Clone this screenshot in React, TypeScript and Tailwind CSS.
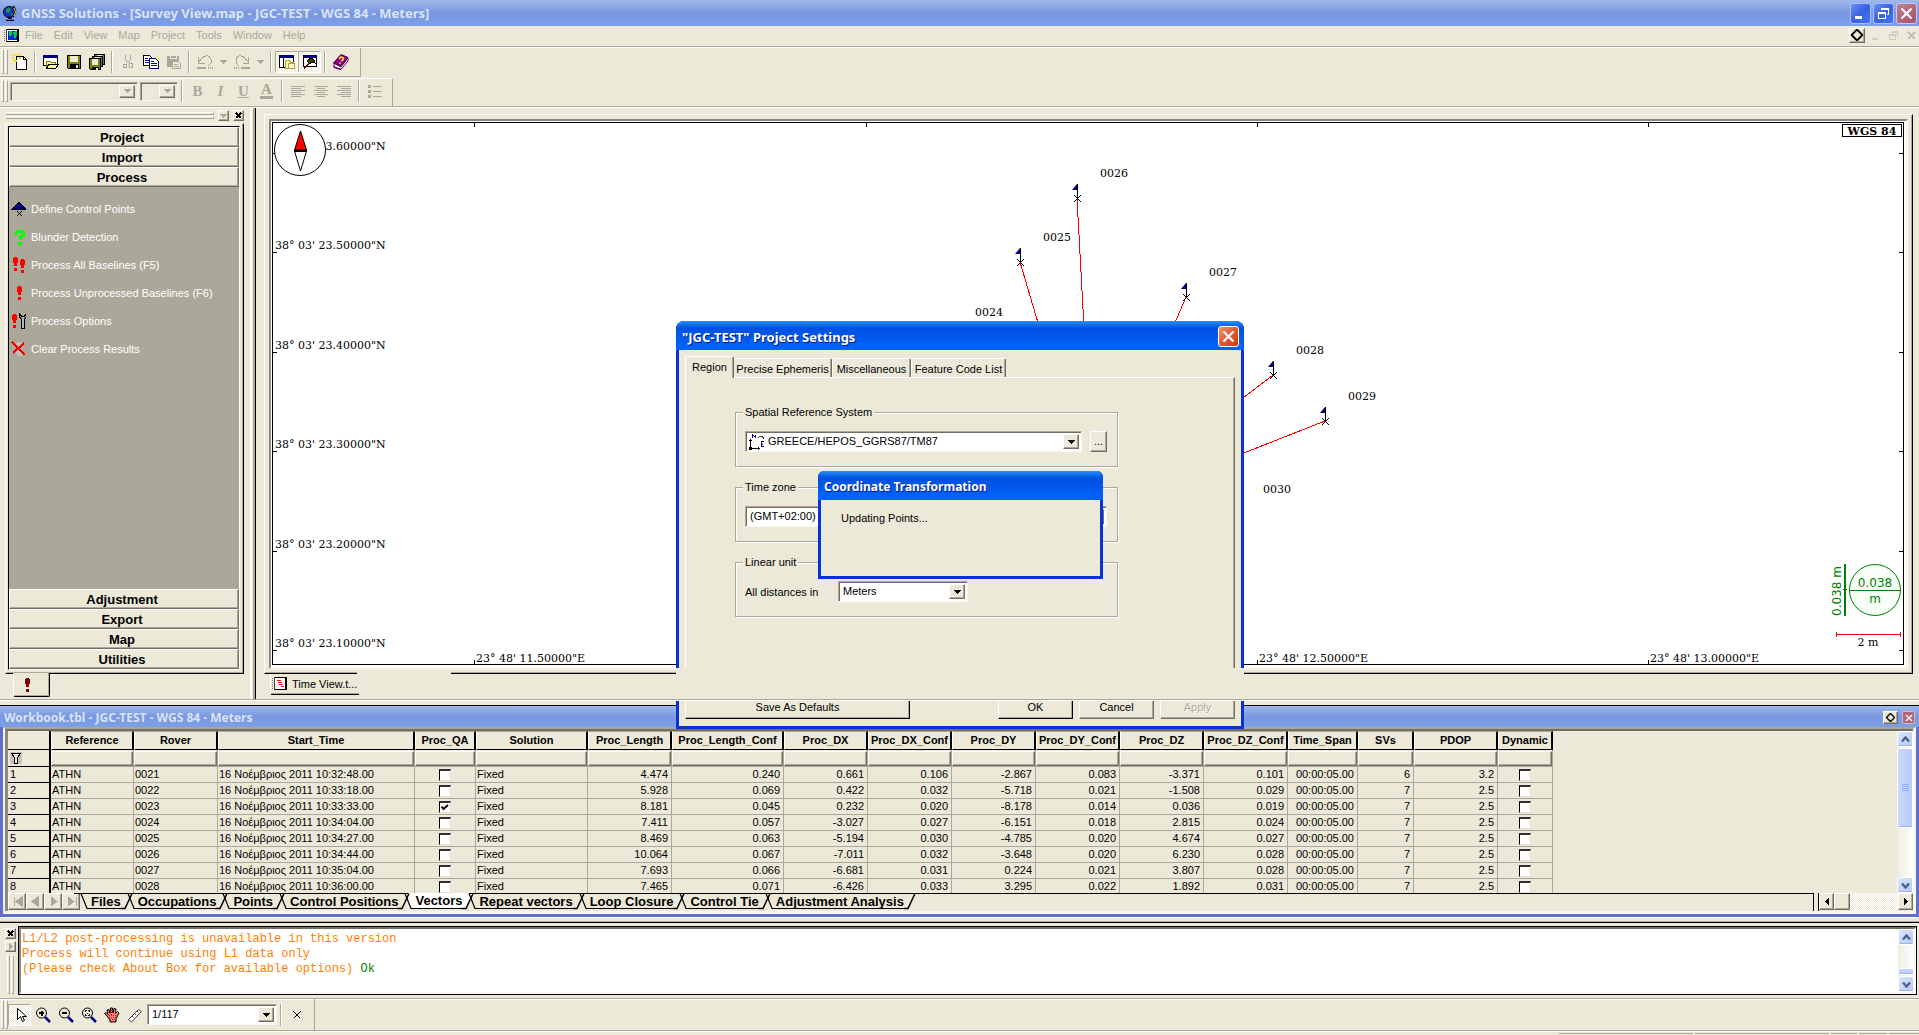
import React, { type ReactNode } from 'react';
import clsx from 'clsx';

const RAISED =
  'border border-t-white border-l-white border-r-[#716f64] border-b-[#716f64] shadow-[inset_-1px_-1px_0_#aca899] bg-[#ece9d8]';
const SUNKEN =
  'border border-t-[#aca899] border-l-[#aca899] border-r-[#f8f7f2] border-b-[#f8f7f2] shadow-[inset_1px_1px_0_#716f64]';
const DITHER =
  'bg-[conic-gradient(#ffffff_25%,#ece9d8_0_50%,#ffffff_0_75%,#ece9d8_0)] bg-[length:2px_2px]';

/* ---------- small shared pieces ---------- */

function Icon({ w = 16, h = 16, children }: { w?: number; h?: number; children: ReactNode }) {
  return (
    <svg width={w} height={h} viewBox={`0 0 ${w} ${h}`} shapeRendering="crispEdges" fill="none" aria-hidden="true" className="shrink-0">
      {children}
    </svg>
  );
}

function Arrow({ dim = false }: { dim?: boolean }) {
  return (
    <Icon w={7} h={4}>
      <path d="M0 0h7L3.5 4z" fill={dim ? '#aca899' : '#000'} />
    </Icon>
  );
}

function Combo({ label, value, className, disabled = false, icon }: { label: string; value: string; className: string; disabled?: boolean; icon?: ReactNode }) {
  return (
    <span className={clsx('relative flex items-center p-[2px]', SUNKEN, className, disabled ? 'bg-[#ece9d8]' : 'bg-white')}>
      {icon}
      <select aria-label={label} disabled={disabled} className="h-full min-w-0 flex-1 appearance-none bg-transparent pl-0.5 leading-none text-black outline-none">
        <option>{value}</option>
      </select>
      <span className={clsx('pointer-events-none flex h-full w-4 shrink-0 items-center justify-center', RAISED)}>
        <Arrow dim={disabled} />
      </span>
    </span>
  );
}

function Grip() {
  return (
    <span className="flex h-full gap-px py-px pl-px" aria-hidden="true">
      <span className="w-[3px] border border-l-white border-t-white border-r-[#aca899] border-b-[#aca899]" />
      <span className="w-[3px] border border-l-white border-t-white border-r-[#aca899] border-b-[#aca899]" />
    </span>
  );
}

function Sep() {
  return <span className="mx-[3px] h-[22px] w-0.5 border-l border-l-[#aca899] border-r border-r-white" aria-hidden="true" />;
}

function Tool({ label, children, on = false, narrow = false }: { label: string; children: ReactNode; on?: boolean; narrow?: boolean }) {
  return (
    <button
      type="button"
      aria-label={label}
      className={clsx(
        'flex h-[22px] items-center justify-center',
        narrow ? 'w-3.5' : 'w-[23px]',
        on && 'border border-t-[#aca899] border-l-[#aca899] border-r-white border-b-white',
        on && DITHER,
      )}
    >
      {children}
    </button>
  );
}

/* ---------- icons ---------- */

const NewIcon = () => (
  <Icon>
    <path d="M4.5 2.5h7l3 3v10h-10z" fill="#fff" stroke="#000" />
    <path d="M11.500 2.500v3h3" stroke="#000" />
    <path d="M0 0l2 2M4 0v2M8 0l-2 2M0 4h2M6 4h3M1 8l2-2M4 6v2" stroke="#f0e020" strokeWidth="2" />
  </Icon>
);
const OpenIcon = () => (
  <Icon>
    <path d="M.5 1.500h14v10H.5z" fill="#fff" stroke="#000" />
    <path d="M0 1h15v3H0z" fill="#000080" />
    <path d="M3.500 14.500v-7h4l1 1h4v2" fill="#ffff9c" stroke="#808000" />
    <path d="M3.500 14.500l2-4h10l-3 4z" fill="#ffff9c" stroke="#000" />
  </Icon>
);
const SaveIcon = ({ x = 0, y = 1, s = 13 }: { x?: number; y?: number; s?: number }) => (
  <g transform={`translate(${x} ${y})`}>
    <path d={`M.5.5h${s}v${s}h-${s - 1}l-1-1z`} fill="#808000" stroke="#000" />
    <path d={`M3 1h${s - 5}v6h-${s - 5}z`} fill="#ece9d8" />
    <path d={`M3 9h${s - 4}v4h-${s - 4}z`} fill="#000" />
    <path d={`M${s - 4} 10h2v3h-2z`} fill="#ece9d8" />
  </g>
);
const CutIcon = () => (
  <Icon>
    <path d="M5.500 1v4l2 4M10.500 1v4l-2 4" stroke="#aca899" />
    <circle cx="5" cy="12" r="2" stroke="#aca899" />
    <circle cx="11" cy="11.500" r="2" stroke="#aca899" />
  </Icon>
);
const CopyIcon = () => (
  <Icon>
    <path d="M.5 1.500h6l2 2v8h-8z" fill="#fff" stroke="#000" />
    <path d="M2 4.500h3M2 6.500h5M2 8.500h5" stroke="#000080" />
    <path d="M6.500 4.500h6l3 3v7h-9z" fill="#fff" stroke="#000080" />
    <path d="M8 7.500h3M8 9.500h6M8 11.500h6" stroke="#000080" />
  </Icon>
);
const PasteIcon = () => (
  <Icon>
    <path d="M1 2h12v11H1z" fill="#aca899" />
    <path d="M4 1h6v3H4z" fill="#aca899" stroke="#ece9d8" />
    <path d="M6.500 7.500h6l2 2v5h-8z" fill="#ece9d8" stroke="#aca899" />
    <path d="M8 10.500h4M8 12.500h5" stroke="#aca899" />
  </Icon>
);
const Undo = ({ flip = false }: { flip?: boolean }) => (
  <Icon>
    <g transform={flip ? 'translate(16 0) scale(-1 1)' : undefined} stroke="#aca899">
      <path d="M1.500 3v6h6M2 8l3-4q6-5 9 1v4l-3 3" />
      <path d="M0 13.500h9M11 13.500h1M13 13.500h1M15 13.500h1" strokeWidth="2" />
    </g>
  </Icon>
);
const ProjectWin = () => (
  <Icon>
    <path d="M.5 1.500h14v12H.5z" fill="#fff" stroke="#000" />
    <path d="M0 1h15v3H0z" fill="#000080" />
    <path d="M4.500 4v9" stroke="#000" />
    <path d="M6.500 14.500v-8h4l1 2h3v6z" fill="#ffff9c" stroke="#aca040" />
    <path d="M9 9h6v5H9z" fill="#fff8c0" stroke="#aca040" />
  </Icon>
);
const HammerWin = () => (
  <Icon>
    <path d="M1.500 1.500h13v11h-13z" fill="#fff" stroke="#000" />
    <path d="M1 1h14v3H1z" fill="#000080" />
    <path d="M2 14.500l7-7" stroke="#800000" strokeWidth="2" />
    <path d="M5 7l4-3 3 2 1 3-3-1-2 2z" fill="#404000" stroke="#000" />
  </Icon>
);
const BookIcon = () => (
  <Icon>
    <path d="M1 9v4l7 2.500L15 7V4L8 13z" fill="#fff" stroke="#500050" shapeRendering="auto" />
    <path d="M.5 9L8 .5l7 3L8 12z" fill="#900090" stroke="#400040" shapeRendering="auto" />
    <path d="M.5 13l7.500 2.500" stroke="#800080" strokeWidth="1.500" shapeRendering="auto" />
    <path d="M6 5l2-2 2.500 1-.5 2-2 1M7 8.500v1.500" stroke="#ffd030" strokeWidth="1.500" shapeRendering="auto" />
  </Icon>
);
const Lines = ({ kind }: { kind: 'l' | 'c' | 'r' }) => (
  <Icon>
    <path
      d={
        kind === 'l'
          ? 'M1 3.500h14M1 5.500h10M1 7.500h14M1 9.500h10M1 11.500h14M1 13.500h10'
          : kind === 'c'
            ? 'M1 3.500h14M4 5.500h8M1 7.500h14M4 9.500h8M1 11.500h14M4 13.500h8'
            : 'M1 3.500h14M5 5.500h10M1 7.500h14M5 9.500h10M1 11.500h14M5 13.500h10'
      }
      stroke="#aca899"
    />
  </Icon>
);
const ListIcon = () => (
  <Icon>
    <path d="M1 2h3v3H1zM1 7h3v3H1zM1 12h3v3H1z" fill="#aca899" />
    <path d="M6 3.500h9M6 8.500h9M6 13.500h9" stroke="#aca899" />
  </Icon>
);
const Globe = () => (
  <svg width="16" height="16" viewBox="0 0 16 16" aria-hidden="true">
    <circle cx="7" cy="7" r="5.500" fill="#1030c8" stroke="#001" />
    <path d="M4 4l3-2 2 3-2 3-3-1zM8 9l3-1-1 3z" fill="#2a8a50" />
    <path d="M11 1q5 5 0 11M6 13h4M4 15.500h8" stroke="#000" strokeWidth="1.500" fill="none" />
    <path d="M12 3q3 4 0 8" stroke="#e8d820" fill="none" />
  </svg>
);
const Lens = ({ kind }: { kind: 'in' | 'out' | 'fit' }) => (
  <Icon>
    <path d="M10 10l5 5" stroke="#000080" strokeWidth="2.500" shapeRendering="auto" />
    <circle cx="6.500" cy="6" r="5" fill="#ece9d8" stroke="#000" shapeRendering="auto" />
    {kind === 'in' && <path d="M4 6h5M6.500 3.500v5" stroke="#000" strokeWidth="2" />}
    {kind === 'out' && <path d="M4 6h5" stroke="#000" strokeWidth="2" />}
    {kind === 'fit' && <path d="M4 3h2v1H5v1H4zM9 3H7v1h1v1h1zM4 9h2V8H5V7H4zM9 9H7V8h1V7h1zM6 5.500h1v1H6z" fill="#202020" />}
  </Icon>
);
const CursorIcon = () => (
  <Icon>
    <path d="M5.500 1.500v11l3-3 2 5 2-1-2-4h4z" fill="#fff" stroke="#000" shapeRendering="auto" />
  </Icon>
);
const HandIcon = () => (
  <Icon>
    <path d="M3 9L.5 6.500 2 5.500l2 2L3 3l2-.5L6 6l.5-5h2L9 6l1-4.500 2 .5-.5 4.500 2-2L15 6l-3 6v3H6v-2z" fill="#f08080" stroke="#000" shapeRendering="auto" />
    <path d="M5 8.500h7M5 10.500h7M6 12.500h5M7 3v5M11 4v3" stroke="#e01818" strokeDasharray="1 1" />
  </Icon>
);
const RulerIcon = () => (
  <Icon>
    <path d="M1.500 12.500l10-10 3 2-10 10.500z" fill="#fff" stroke="#404040" shapeRendering="auto" />
    <path d="M5 9l1.500 1.500M7.500 6.500L9 8M10 4l1.500 1.500" stroke="#404040" shapeRendering="auto" />
  </Icon>
);
const Bang = ({ x, y = 1, color = '#ff0000' }: { x: number; y?: number; color?: string }) => (
  <path d={`M${x} ${y}h3v1h1v5h-1v3h-3v-3h-1v-5h1zM${x} ${y + 11}h3v3h-3z`} fill={color} />
);
const DocIcon = ({ red = true }: { red?: boolean }) => (
  <Icon>
    <path d="M2 1h13v13H2z" fill="#fff" />
    <path d="M3 1.500h11.500v12H3M13.500 2v11" stroke="#000" />
    <path d="M2.500 1v13" stroke="#404040" />
    <path d="M.5 2v12" stroke="#808080" strokeDasharray="1 1" />
    {red ? (
      <path d="M5 4.500h4M6 6.500h4M7 8.500h4M9 10.500h3" stroke="#f00" />
    ) : (
      <>
        <path d="M4 3h9v9H4z" fill="#0020e0" />
        <path d="M5 3h3v3l-2 3-1-2zM9 4l4-1v4l-2 4-1-3z" fill="#00d040" />
      </>
    )}
  </Icon>
);
const Diamond = ({ size }: { size: number }) => (
  <svg width={size} height={size} viewBox="0 0 11 11" aria-hidden="true">
    <path d="M5.500 .5l5 5-5 5-5-5z" fill="none" stroke="#000" strokeWidth="1.700" strokeLinejoin="bevel" />
  </svg>
);

/* ---------- window chrome ---------- */

function CaptionButton({ label, red = false, children, dim = false }: { label: string; red?: boolean; dim?: boolean; children: ReactNode }) {
  return (
    <button
      type="button"
      aria-label={label}
      className={clsx(
        'flex h-[21px] w-[21px] items-center justify-center rounded-[3px] border',
        red && dim && 'border-[#c8c8f0] bg-linear-to-br from-[#c08090] to-[#a85068]',
        red && !dim && 'border-white bg-linear-to-br from-[#f09070] via-[#e05a34] to-[#c83808]',
        !red && 'border-[#a8c0f8] bg-linear-to-br from-[#6a8ef0] via-[#3a62e0] to-[#3f78f0]',
      )}
    >
      {children}
    </button>
  );
}

const Cross = ({ size = 13 }: { size?: number }) => (
  <svg width={size} height={size} viewBox="0 0 13 13" aria-hidden="true">
    <path d="M1.500 1.500l10 10M11.500 1.500l-10 10" stroke="#fff" strokeWidth="2.200" />
  </svg>
);

function TitleBar() {
  return (
    <header className="flex h-[26px] items-center bg-linear-to-b from-[#9db9eb] via-[#7b97e0] to-[#7ba0e8] pl-0.5 pr-0.5">
      <Globe />
      <h1 className="ml-[3px] flex-1 font-['Noto_Sans',sans-serif] text-[13px] font-bold text-[#d8e4f8]">
        GNSS Solutions - [Survey View.map - JGC-TEST - WGS 84 - Meters]
      </h1>
      <div className="flex gap-0.5">
        <CaptionButton label="Minimize">
          <Icon w={13} h={13}><path d="M1 9h7v3H1z" fill="#fff" /></Icon>
        </CaptionButton>
        <CaptionButton label="Restore">
          <Icon w={13} h={13}>
            <path d="M4.500 1.500h7v6h-2" stroke="#fff" />
            <path d="M4 1h8v2H4zM1 5h8v2H1z" fill="#fff" />
            <path d="M1.500 5.500h7v6h-7z" stroke="#fff" />
          </Icon>
        </CaptionButton>
        <CaptionButton label="Close" red dim><Cross /></CaptionButton>
      </div>
    </header>
  );
}

const MENUS = ['File', 'Edit', 'View', 'Map', 'Project', 'Tools', 'Window', 'Help'];

function MenuBar() {
  return (
    <nav className="flex h-[22px] items-center border-b border-b-white pl-1 pb-px shadow-[inset_0_-1px_0_#aca899]">
      <DocIcon red={false} />
      <ul className="ml-[5px] flex flex-1 gap-[11px] pb-0.5 text-[#aca899]">
        {MENUS.map((m) => (
          <li key={m}><button type="button">{m}</button></li>
        ))}
      </ul>
      <div className="flex items-center gap-0.5 pb-0.5">
        <button type="button" aria-label="Pin" className={clsx('flex h-[15px] w-4 items-center justify-center', RAISED)}>
          <Diamond size={12} />
        </button>
        <button type="button" aria-label="Minimize document" className="flex h-[15px] w-4 items-center justify-center bg-[#eeebdd]"><Icon w={11} h={11}><path d="M2 8h6v2H2z" fill="#d0cdbc" /></Icon></button>
        <button type="button" aria-label="Restore document" className="flex h-[15px] w-4 items-center justify-center bg-[#eeebdd]"><Icon w={11} h={11}><path d="M3.500 1.500h6v5M1.500 4.500h6v5h-6zM3 2h7M1 5h7" stroke="#d0cdbc" /></Icon></button>
        <button type="button" aria-label="Close document" className="flex h-[15px] w-4 items-center justify-center bg-[#eeebdd]"><Icon w={11} h={11}><path d="M2 2l7 7M9 2l-7 7" stroke="#c4c1b0" strokeWidth="2" /></Icon></button>
      </div>
    </nav>
  );
}

function Toolbars() {
  return (
    <div className="flex flex-col items-start gap-px border-b border-b-[#aca899] shadow-[0_1px_0_#fff]">
      <div role="toolbar" aria-label="Standard" className="flex h-[29px] items-center border-r border-b border-[#aca899] pr-2 pb-px">
        <Grip />
        <Tool label="New"><NewIcon /></Tool>
        <Sep />
        <Tool label="Open"><OpenIcon /></Tool>
        <Tool label="Save"><Icon><SaveIcon x={1} /></Icon></Tool>
        <Tool label="Save all"><Icon><SaveIcon x={5} y={0} s={10} /><SaveIcon x={3} y={2} s={10} /><SaveIcon x={0} y={4} s={11} /></Icon></Tool>
        <Sep />
        <Tool label="Cut"><CutIcon /></Tool>
        <Tool label="Copy"><CopyIcon /></Tool>
        <Tool label="Paste"><PasteIcon /></Tool>
        <Sep />
        <Tool label="Undo"><Undo /></Tool>
        <Tool label="Undo list" narrow><Arrow dim /></Tool>
        <Tool label="Redo"><Undo flip /></Tool>
        <Tool label="Redo list" narrow><Arrow dim /></Tool>
        <Sep />
        <Tool label="Project window" on><ProjectWin /></Tool>
        <Tool label="Tools window" on><HammerWin /></Tool>
        <Sep />
        <Tool label="Help"><BookIcon /></Tool>
      </div>
      <div role="toolbar" aria-label="Formatting" className="flex h-7 items-center border-t border-r border-t-white border-r-[#aca899] pr-1.5 pb-[3px]">
        <Grip />
        <Combo label="Font" value="" disabled className="ml-0.5 h-[19px] w-[128px]" />
        <Combo label="Font size" value="" disabled className="ml-0.5 h-[19px] w-[38px]" />
        <Sep />
        <Tool label="Bold"><span className="font-['Liberation_Serif',serif] text-[15px] font-bold text-[#aca899]">B</span></Tool>
        <Tool label="Italic"><span className="font-['Liberation_Serif',serif] text-[15px] font-bold italic text-[#aca899]">I</span></Tool>
        <Tool label="Underline"><span className="font-['Liberation_Serif',serif] text-[15px] font-bold text-[#aca899] underline">U</span></Tool>
        <Tool label="Font colour"><span className="border-b-[3px] border-b-[#aca899] px-px font-['Liberation_Serif',serif] text-[15px] leading-[13px] font-bold text-[#aca899]">A</span></Tool>
        <Sep />
        <Tool label="Align left"><Lines kind="l" /></Tool>
        <Tool label="Align center"><Lines kind="c" /></Tool>
        <Tool label="Align right"><Lines kind="r" /></Tool>
        <Sep />
        <Tool label="Bullets"><ListIcon /></Tool>
      </div>
    </div>
  );
}

/* ---------- left command pane ---------- */

const COMMANDS: { label: string; icon: ReactNode }[] = [
  { label: 'Define Control Points', icon: <><path d="M8 1l7 7H1z" fill="#000080" stroke="#000" /><path d="M6 10l5 5M11 10l-5 5" stroke="#000" /></> },
  { label: 'Blunder Detection', icon: <><path d="M5 6V3.500L6.500 2h4L12 3.500v3L9 8.500V11" stroke="#00ff00" strokeWidth="3" /><path d="M7 13h4v3H7z" fill="#00ff00" /></> },
  { label: 'Process All Baselines (F5)', icon: <><Bang x={3} y={0} /><Bang x={10} y={2} /></> },
  { label: 'Process Unprocessed Baselines (F6)', icon: <Bang x={7} /> },
  { label: 'Process Options', icon: <><Bang x={2} /><path d="M8.500 1v3l2 2v9h3V6l2-2V1l-2 2h-3z" fill="#b0b8c0" stroke="#000" /></> },
  { label: 'Clear Process Results', icon: <><path d="M6 1h5l1 2-2 4 2 6-2 2H7l-2-2 2-6-2-4z" fill="#c0c0c0" /><path d="M1 1l13 13M13 2L2 12" stroke="#f00" strokeWidth="2" /></> },
];

function Heading({ children }: { children: string }) {
  return (
    <button type="button" className={clsx('block h-5 w-full pr-1 text-center text-[13px] leading-none font-bold', RAISED)}>{children}</button>
  );
}

function CommandPane() {
  return (
    <aside className="flex w-[250px] flex-col pr-1.5 pl-[5px]">
      <div className="flex h-[15px] items-center gap-1">
        <span className="flex-1">
          <span className="block h-[3px] border border-t-white border-l-white border-r-[#aca899] border-b-[#aca899]" />
          <span className="mt-px block h-[3px] border border-t-white border-l-white border-r-[#aca899] border-b-[#aca899]" />
        </span>
        <button type="button" aria-label="Pane menu" className={clsx('flex h-[11px] w-[11px] items-center justify-center', RAISED)}><Arrow dim /></button>
        <button type="button" aria-label="Close pane" className={clsx('flex h-[11px] w-[11px] items-center justify-center', RAISED)}>
          <Icon w={7} h={7}><path d="M1 1l5 5M6 1L1 6" stroke="#000" strokeWidth="2" /></Icon>
        </button>
      </div>
      <div className="flex flex-1 border border-t-white border-l-white border-r-black border-b-black p-0.5 shadow-[inset_-1px_-1px_0_#aca899]">
        <div className="mr-px mb-px flex flex-1 flex-col border border-t-black border-l-black border-r-white border-b-white bg-[#aca899]">
          <Heading>Project</Heading>
          <Heading>Import</Heading>
          <Heading>Process</Heading>
          <ul className="flex flex-1 flex-col pt-2 text-white">
            {COMMANDS.map((c) => (
              <li key={c.label} className="h-7">
                <button type="button" className="flex h-full items-center gap-[5px] pl-0.5"><Icon w={15} h={16}>{c.icon}</Icon>{c.label}</button>
              </li>
            ))}
          </ul>
          <Heading>Adjustment</Heading>
          <Heading>Export</Heading>
          <Heading>Map</Heading>
          <Heading>Utilities</Heading>
        </div>
      </div>
      <div className="h-[25px] pl-2">
        <button type="button" aria-label="Commands" className="-mt-px flex h-6 w-[37px] items-center justify-center rounded-b-[2px] border-r border-b border-l border-l-white border-r-black border-b-black bg-[#ece9d8] pr-2 shadow-[inset_-1px_-1px_0_#aca899]">
          <Icon w={6} h={14}><Bang x={1} y={0} color="#800000" /></Icon>
        </button>
      </div>
    </aside>
  );
}

/* ---------- survey map ---------- */

const LAT = [
  { y: 30, t: '38° 03\' 23.60000"N' },
  { y: 129, t: '38° 03\' 23.50000"N' },
  { y: 229, t: '38° 03\' 23.40000"N' },
  { y: 328, t: '38° 03\' 23.30000"N' },
  { y: 428, t: '38° 03\' 23.20000"N' },
  { y: 527, t: '38° 03\' 23.10000"N' },
];
const LON = [
  { x: 201, t: '23° 48\' 11.50000"E' },
  { x: 593, t: '23° 48\' 12.00000"E' },
  { x: 984, t: '23° 48\' 12.50000"E' },
  { x: 1375, t: '23° 48\' 13.00000"E' },
];
const POINTS = [
  { id: '0024', x: 679, y: 214 },
  { id: '0025', x: 747, y: 139 },
  { id: '0026', x: 804, y: 75 },
  { id: '0027', x: 913, y: 174 },
  { id: '0028', x: 1000, y: 252 },
  { id: '0029', x: 1052, y: 298 },
  { id: '0030', x: 967, y: 391 },
];
const BASE = { x: 821, y: 389 };

function SurveyMap() {
  return (
    <div className="relative flex-1 border border-black bg-white">
      <svg className="absolute inset-0 h-full w-full font-['DejaVu_Serif',serif] text-[11px]" role="img" aria-label="Survey map">
        <g shapeRendering="crispEdges" stroke="#000">
          {LAT.map((l) => <path key={l.y} d={`M0 ${l.y}.5h4`} />)}
          {LON.map((l) => <path key={l.x} d={`M${l.x}.5 0v4`} />)}
        </g>
        {LAT.map((l) => <text key={l.t} x="2" y={l.y - 3}>{l.t}</text>)}
        <svg y="100%" className="overflow-visible">
          {LON.map((l) => (
            <g key={l.t}>
              <path d={`M${l.x}.5 0v-4`} stroke="#000" shapeRendering="crispEdges" />
              <text x={l.x + 2} y="-2">{l.t}</text>
            </g>
          ))}
        </svg>
        <g shapeRendering="crispEdges">
          {POINTS.map((p) => <path key={p.id} d={`M${p.x} ${p.y}L${BASE.x} ${BASE.y}`} stroke="#f00" fill="none" />)}
        </g>
        {POINTS.map((p) => (
          <g key={p.id}>
            <path d={`M${p.x + 0.5} ${p.y - 14}v14`} stroke="#000" shapeRendering="crispEdges" />
            <path d={`M${p.x} ${p.y - 14}v6h-5z`} fill="#000080" />
            <path d={`M${p.x - 3} ${p.y - 3}l7 7m0-7l-7 7`} stroke="#000" fill="none" />
            <text x={p.x + 23} y={p.y - 21}>{p.id}</text>
          </g>
        ))}
        <circle cx="27" cy="27" r="25.500" fill="#fff" stroke="#000" />
        <path d="M27.500 8l6 19h-12z" fill="#f00" stroke="#000" />
        <path d="M27.500 48l-6-20h12z" fill="#fff" stroke="#000" />
        <path d="M21 28h13" stroke="#000" strokeWidth="2" />
        <svg x="100%" className="overflow-visible">
          <g shapeRendering="crispEdges" stroke="#000">
            {LAT.map((l) => <path key={l.y} d={`M0 ${l.y}.5h-4`} />)}
            <path d="M-60.500 1.500h59v12h-59z" fill="#fff" />
          </g>
          <text x="-31" y="12" textAnchor="middle" className="font-bold">WGS 84</text>
          <svg y="100%" className="overflow-visible">
            <g fill="#008000" className="font-['DejaVu_Sans',sans-serif] text-[12px]">
              <path d="M-59 -100h2v52h-2zM-60 -75h4v1h-4z" shapeRendering="crispEdges" />
              <text transform="translate(-62 -48) rotate(-90)">0.038 m</text>
              <circle cx="-28" cy="-74" r="25.500" fill="#f8fff8" stroke="#008000" />
              <path d="M-54 -73.500h52" stroke="#008000" shapeRendering="crispEdges" />
              <text x="-28" y="-77" textAnchor="middle">0.038</text>
              <text x="-28" y="-61" textAnchor="middle">m</text>
            </g>
            <path d="M-67 -29.500h65M-66.500 -32v5M-2.500 -32v5" stroke="#f00" shapeRendering="crispEdges" />
            <text x="-35" y="-18" textAnchor="middle">2 m</text>
          </svg>
        </svg>
      </svg>
    </div>
  );
}

function MapWindow() {
  return (
    <main className="mt-1.5 mr-1.5 ml-2 flex min-w-0 flex-1 flex-col">
      <div className="flex flex-1 border border-t-white border-l-white border-r-black border-b-black p-1 shadow-[inset_-1px_-1px_0_#aca899]">
        <div className="flex flex-1 border-2 border-t-[#8c897c] border-l-[#8c897c] border-r-[#f8f7f2] border-b-[#f8f7f2] bg-white pt-px pr-0.5 pb-0.5 pl-px">
          <SurveyMap />
        </div>
      </div>
      <div className="relative h-[25px] pl-1.5">
        <span className="absolute -top-0.5 left-[93px] h-0.5 w-[94px] bg-[#ece9d8]" />
        <button type="button" className="flex h-[21px] items-center gap-1 rounded-bl-[2px] border-b border-l border-b-black border-l-white pr-0.5 pl-px shadow-[inset_0_-1px_0_#aca899]">
          <DocIcon />
          Time View.t...
        </button>
      </div>
    </main>
  );
}

/* ---------- workbook ---------- */

type Align = 'l' | 'r' | 'c';
const COLUMNS: { name: string; w: string; a: Align }[] = [
  { name: 'Reference', w: 'w-[83px]', a: 'l' },
  { name: 'Rover', w: 'w-[84px]', a: 'l' },
  { name: 'Start_Time', w: 'w-[197px]', a: 'l' },
  { name: 'Proc_QA', w: 'w-[61px]', a: 'c' },
  { name: 'Solution', w: 'w-[112px]', a: 'l' },
  { name: 'Proc_Length', w: 'w-[84px]', a: 'r' },
  { name: 'Proc_Length_Conf', w: 'w-[112px]', a: 'r' },
  { name: 'Proc_DX', w: 'w-[84px]', a: 'r' },
  { name: 'Proc_DX_Conf', w: 'w-[84px]', a: 'r' },
  { name: 'Proc_DY', w: 'w-[84px]', a: 'r' },
  { name: 'Proc_DY_Conf', w: 'w-[84px]', a: 'r' },
  { name: 'Proc_DZ', w: 'w-[84px]', a: 'r' },
  { name: 'Proc_DZ_Conf', w: 'w-[84px]', a: 'r' },
  { name: 'Time_Span', w: 'w-[70px]', a: 'r' },
  { name: 'SVs', w: 'w-[56px]', a: 'r' },
  { name: 'PDOP', w: 'w-[84px]', a: 'r' },
  { name: 'Dynamic', w: 'w-[55px]', a: 'c' },
];
const ROWS: string[][] = [
  ['0021', '10:32:48.00', '', '4.474', '0.240', '0.661', '0.106', '-2.867', '0.083', '-3.371', '0.101', '6', '3.2'],
  ['0022', '10:33:18.00', '', '5.928', '0.069', '0.422', '0.032', '-5.718', '0.021', '-1.508', '0.029', '7', '2.5'],
  ['0023', '10:33:33.00', 'x', '8.181', '0.045', '0.232', '0.020', '-8.178', '0.014', '0.036', '0.019', '7', '2.5'],
  ['0024', '10:34:04.00', '', '7.411', '0.057', '-3.027', '0.027', '-6.151', '0.018', '2.815', '0.024', '7', '2.5'],
  ['0025', '10:34:27.00', '', '8.469', '0.063', '-5.194', '0.030', '-4.785', '0.020', '4.674', '0.027', '7', '2.5'],
  ['0026', '10:34:44.00', '', '10.064', '0.067', '-7.011', '0.032', '-3.648', '0.020', '6.230', '0.028', '7', '2.5'],
  ['0027', '10:35:04.00', '', '7.693', '0.066', '-6.681', '0.031', '0.224', '0.021', '3.807', '0.028', '7', '2.5'],
  ['0028', '10:36:00.00', '', '7.465', '0.071', '-6.426', '0.033', '3.295', '0.022', '1.892', '0.031', '7', '2.5'],
];

function Tick({ label, checked }: { label: string; checked: boolean }) {
  return (
    <span className="relative mx-auto block h-3 w-3">
      <input type="checkbox" aria-label={label} defaultChecked={checked} className="block h-3 w-3 appearance-none border-t-2 border-r border-b border-l border-t-[#303030] border-l-black border-r-[#e4e0d0] border-b-[#e4e0d0] bg-white" />
      {checked && (
        <svg width="12" height="12" viewBox="0 0 12 12" aria-hidden="true" className="pointer-events-none absolute inset-0"><path d="M2.500 5.500l2 2.500 4.500-4" fill="none" stroke="#000" strokeWidth="2" /></svg>
      )}
    </span>
  );
}

function Grid() {
  return (
    <table className="w-[1545px] table-fixed border-separate border-spacing-0">
      <thead>
        <tr>
          <th scope="col" aria-label="Row" className="h-[19px] w-[43px] border-r-2 border-b border-black" />
          {COLUMNS.map((c) => (
            <th key={c.name} scope="col" className={clsx('h-[19px] border-t border-r-2 border-b border-l border-t-[#aca899] border-r-black border-b-black border-l-white p-0 text-center text-[11px] leading-none font-bold whitespace-nowrap', c.w)}>{c.name}</th>
          ))}
        </tr>
        <tr>
          <td className="h-[17px] border-r-2 border-b border-r-black border-b-black p-0 pl-0.5">
            <Icon w={12} h={12}><path d="M0 0h12v12H0z" fill="#c8c5b8" /><path d="M1.500 1.500h9L7.500 5.500V11h-3V5.500z" fill="#ece9d8" stroke="#000" /></Icon>
          </td>
          {COLUMNS.map((c) => (
            <td key={c.name} className="h-[17px] border-r border-b border-[#aca899] p-0">
              <button type="button" aria-label={`Filter ${c.name}`} className={clsx('block h-[15px] w-full', RAISED)} />
            </td>
          ))}
        </tr>
      </thead>
      <tbody>
        {ROWS.map((r, i) => {
          const values = ['ATHN', r[0], `16 Νοέμβριος 2011 ${r[1]}`, r[2], 'Fixed', ...r.slice(3, 11), '00:00:05.00', r[11], r[12], ''];
          return (
            <tr key={r[0]}>
              <th scope="row" className="h-4 border-r-2 border-b border-black p-0 pl-0.5 text-left leading-[15px] font-normal">{i + 1}</th>
              {values.map((v, j) => {
                const col = COLUMNS[j];
                return (
                  <td key={col.name} className={clsx('h-4 border-r border-b border-[#aca899] p-0 leading-[15px] whitespace-nowrap', col.a === 'l' && 'pl-px', col.a === 'r' && 'pr-[3px] text-right')}>
                    {col.a === 'c' ? <Tick label={`${col.name} ${r[0]}`} checked={v === 'x'} /> : v}
                  </td>
                );
              })}
            </tr>
          );
        })}
      </tbody>
    </table>
  );
}

function ScrollButton({ dir }: { dir: 'up' | 'down' }) {
  return (
    <button type="button" aria-label={`Scroll ${dir}`} className="flex h-4 w-full items-center justify-center rounded-[2px] border border-white bg-linear-to-br from-[#dbe5fe] to-[#b4c8f6] shadow-[inset_0_-1px_0_#9cb4ea]">
      <svg width="9" height="7" viewBox="0 0 9 7" aria-hidden="true"><path d={dir === 'up' ? 'M1 5.500l3.500-4 3.500 4' : 'M1 1.500l3.500 4 3.500-4'} fill="none" stroke="#4d6185" strokeWidth="2.400" /></svg>
    </button>
  );
}

function ScrollBar({ children }: { children: ReactNode }) {
  return (
    <div className="flex w-4 shrink-0 flex-col bg-linear-to-r from-[#eeede5] to-[#fefefb]">
      <ScrollButton dir="up" />
      {children}
      <ScrollButton dir="down" />
    </div>
  );
}

const SHEETS = ['Files', 'Occupations', 'Points', 'Control Positions', 'Vectors', 'Repeat vectors', 'Loop Closure', 'Control Tie', 'Adjustment Analysis'];
const ACTIVE = 'Vectors';

function Joint({ before, after }: { before?: string; after?: string }) {
  return (
    <svg width="17" height="18" viewBox="0 0 17 18" aria-hidden="true" className="shrink-0">
      {before === ACTIVE && <path d="M0 0h11L4 16H0z" fill="#fff" />}
      {after === ACTIVE && <path d="M7 0h10v16h-3z" fill="#fff" />}
      {before && before !== ACTIVE && <path d="M0 .5h10" stroke="#000" />}
      {after && after !== ACTIVE && <path d="M7 .5h10" stroke="#000" />}
      {!before && <path d="M0 .5h8" stroke="#000" />}
      {!after && <path d="M8 .5h9" stroke="#000" />}
      {before && <path d="M0 15.500h4L11 .5" fill="none" stroke="#000" strokeWidth="1.500" />}
      {after && <path d="M7 .5l6 15h4" fill="none" stroke="#000" strokeWidth="1.200" />}
    </svg>
  );
}

function SheetTabs() {
  return (
    <div className="flex h-[18px]">
      <div className="flex">
        {['M3 1v9M11 1L5 5.500l6 4.500z', 'M9 1L3 5.500 9 10z', 'M4 1l6 4.500L4 10z', 'M3 1l6 4.500L3 10zM11 1v9'].map((d, i) => (
          <button key={d} type="button" aria-label={['First sheet', 'Previous sheet', 'Next sheet', 'Last sheet'][i]} className={clsx('flex h-[17px] w-[18px] items-center justify-center', RAISED)}>
            <Icon w={13} h={11}><path d={d} fill="#aca899" stroke="#aca899" /></Icon>
          </button>
        ))}
      </div>
      <div role="tablist" className="flex min-w-0 flex-1 border-r border-r-black">
        <div className="-ml-1.5 flex">
          {SHEETS.map((s, i) => (
            <React.Fragment key={s}>
              <Joint before={SHEETS[i - 1]} after={s} />
              <button
                type="button"
                role="tab"
                aria-selected={s === ACTIVE}
                className={clsx('h-4 border-b border-b-black text-[13px] leading-[15px] font-bold whitespace-nowrap', s === ACTIVE ? 'bg-white' : 'border-t border-t-black')}
              >
                {s}
              </button>
            </React.Fragment>
          ))}
          <Joint before={SHEETS[SHEETS.length - 1]} />
        </div>
        <span className="flex-1 border-t border-t-black" />
      </div>
      <div className="ml-1 flex w-[95px] border-l border-l-black">
        <button type="button" aria-label="Scroll left" className={clsx('flex h-[17px] w-[15px] items-center justify-center', RAISED)}><Icon w={4} h={7}><path d="M4 0v7L0 3.500z" fill="#000" /></Icon></button>
        <span className={clsx('h-[17px] w-4', RAISED)} />
        <span className={clsx('flex-1', DITHER)} />
        <button type="button" aria-label="Scroll right" className={clsx('flex h-[17px] w-[15px] items-center justify-center', RAISED)}><Icon w={4} h={7}><path d="M0 0v7l4-3.500z" fill="#000" /></Icon></button>
      </div>
    </div>
  );
}

function Workbook() {
  return (
    <section className="mt-1 border-t border-t-black">
      <div className="flex h-[21px] items-center bg-linear-to-b from-[#9db9eb] via-[#7b97e0] to-[#7ba0e8] pt-0.5 pr-1 pl-1">
        <h2 className="flex-1 font-['Noto_Sans',sans-serif] text-[12px] font-bold text-[#d8e4f8]">Workbook.tbl - JGC-TEST - WGS 84 - Meters</h2>
        <button type="button" aria-label="Pin workbook" className={clsx('flex h-[13px] w-[15px] items-center justify-center', RAISED)}>
          <Diamond size={9} />
        </button>
        <button type="button" aria-label="Close workbook" className="ml-1 flex h-[13px] w-[13px] items-center justify-center rounded-[2px] border border-[#d0b8d0] bg-[#b06878]"><Cross size={8} /></button>
      </div>
      <div className="border-r-[3px] border-b-[3px] border-l-[3px] border-[#6070d0] bg-[#ece9d8]">
        <div className="border-t-2 border-r-[3px] border-b-[3px] border-l-2 border-t-[#aca899] border-l-[#f4f2e8] border-r-[#f8f7f2] border-b-[#f8f7f2]">
          <div className="border-t-2 border-l-[3px] border-t-[#716f64] border-l-[#8c897c]">
            <div className="flex h-[162px]">
              <div className="min-w-0 flex-1 overflow-hidden"><Grid /></div>
              <ScrollBar>
                <span className="my-px flex h-20 items-center justify-center rounded-[2px] border border-white bg-linear-to-r from-[#cad8fd] to-[#b9cbf8] shadow-[inset_0_-1px_0_#9cb4ea]">
                  <Icon w={7} h={8}><path d="M0 .5h7M0 2.500h7M0 4.500h7M0 6.500h7" stroke="#8cb0f8" /></Icon>
                </span>
                <span className="flex-1" />
              </ScrollBar>
            </div>
            <SheetTabs />
          </div>
        </div>
      </div>
    </section>
  );
}

/* ---------- message log and bottom bar ---------- */

function MessageLog() {
  return (
    <section className="flex h-[75px] pt-[3px] pr-0.5 pb-[3px] pl-[5px]">
      <div className="flex w-[13px] flex-col gap-0.5 pt-0.5">
        <button type="button" aria-label="Close log" className={clsx('flex h-[11px] w-[11px] items-center justify-center', RAISED)}><Icon w={7} h={7}><path d="M1 1l5 5M6 1L1 6" stroke="#000" strokeWidth="2" /></Icon></button>
        <button type="button" aria-label="Expand log" className={clsx('flex h-[11px] w-[11px] items-center justify-center', RAISED)}><Icon w={4} h={7}><path d="M0 0v7l4-3.500z" fill="#aca899" /></Icon></button>
        <span className="flex flex-1 pl-px"><Grip /></span>
      </div>
      <div className="flex flex-1 border border-black">
        <div className="flex flex-1 border-2 border-t-[#716f64] border-l-[#8c897c] border-r-[#f8f7f2] border-b-[#f8f7f2] bg-white">
          <div role="log" className="flex-1 pt-[3px] pl-px font-['Liberation_Mono',monospace] text-[12px] leading-[15px] text-[#ff8000]">
            <p>L1/L2 post-processing is unavailable in this version</p>
            <p>Process will continue using L1 data only</p>
            <p>(Please check About Box for available options) <span className="text-[#008000]">Ok</span></p>
          </div>
          <ScrollBar>
            <span className="flex-1" />
            <span className="mb-px h-[7px] rounded-[2px] border border-white bg-[#c2d2fb] shadow-[inset_0_-1px_0_#9cb4ea]" />
          </ScrollBar>
        </div>
      </div>
    </section>
  );
}

function BottomBar() {
  return (
    <footer>
      <div className="flex border-t border-b border-[#aca899] shadow-[0_1px_0_#fff,inset_0_1px_0_#fff]">
        <div role="toolbar" aria-label="View" className="flex h-[31px] items-center border-r border-r-[#aca899] pr-1.5">
          <Grip />
          <Tool label="Select" on><CursorIcon /></Tool>
          <Tool label="Zoom in"><Lens kind="in" /></Tool>
          <Tool label="Zoom out"><Lens kind="out" /></Tool>
          <Tool label="Zoom to fit"><Lens kind="fit" /></Tool>
          <Tool label="Pan"><HandIcon /></Tool>
          <Tool label="Measure"><RulerIcon /></Tool>
          <Combo label="Scale" value="1/117" className="ml-px h-[21px] w-[130px]" />
          <Sep />
          <Tool label="Clear scale"><Icon w={8} h={8}><path d="M.5.5l7 7M7.500.5l-7 7" stroke="#000" /></Icon></Tool>
        </div>
      </div>
      <div className="flex h-1 justify-end gap-0.5 pt-0.5">
        <span className="w-[134px] border-t border-t-[#aca899]" />
        <span className="w-[134px] border-t border-t-[#aca899]" />
        <span className="w-[26px] border-t border-t-[#aca899]" />
        <span className="w-[28px] border-t border-t-[#aca899]" />
        <span className="w-[30px] border-t border-t-[#aca899]" />
      </div>
    </footer>
  );
}

/* ---------- dialogs ---------- */

const CAPTION =
  "flex items-center bg-linear-to-b from-[#2a8cf8] from-0% via-[#0050e0] via-25% to-[#0066fc] pt-0.5 font-['Noto_Sans',sans-serif] font-bold text-white [text-shadow:1px_1px_0_#0a1883]";

function Group({ title, children }: { title: string; children: ReactNode }) {
  return (
    <fieldset className="h-[62px] w-[383px] border border-[#aca899] px-[9px] shadow-[1px_1px_0_#fff,inset_1px_1px_0_#fff]">
      <legend className="-ml-0.5 bg-[#ece9d8] px-0.5 leading-[14px]">{title}</legend>
      <div className="flex items-center pt-3">{children}</div>
    </fieldset>
  );
}

function PushButton({ children, className, disabled = false }: { children: string; className: string; disabled?: boolean }) {
  return (
    <button type="button" disabled={disabled} className={clsx('h-6', RAISED, className, disabled && 'text-[#aca899] [text-shadow:1px_1px_0_#fff]')}>{children}</button>
  );
}

function ProjectSettings() {
  return (
    <div role="dialog" aria-label="Project Settings" className="absolute top-[321px] left-[676px] flex h-[408px] w-[568px] flex-col rounded-t-[8px] bg-[#0831d9]">
      <div className={clsx('h-[29px] rounded-t-[8px] pr-[5px] pl-1.5 text-[13px]', CAPTION)}>
        <h2 className="flex-1">"JGC-TEST" Project Settings</h2>
        <CaptionButton label="Close" red><Cross /></CaptionButton>
      </div>
      <div className="mx-[3px] mb-[3px] flex flex-1 flex-col bg-[#ece9d8] px-1.5 pt-1.5 pb-[7px]">
        <div role="tablist" className="flex items-end">
          <button type="button" role="tab" aria-selected="true" className="z-10 -mb-px h-[22px] w-[49px] rounded-t-[2px] border-t border-r border-l border-t-white border-l-white border-r-[#716f64] bg-[#ece9d8] pb-0.5 shadow-[inset_-1px_0_0_#aca899]">Region</button>
          <button type="button" role="tab" aria-selected="false" className="h-[19px] w-[98px] rounded-t-[2px] border-t border-r border-t-white border-r-[#716f64] pt-px shadow-[inset_-1px_0_0_#aca899]">Precise Ephemeris</button>
          <button type="button" role="tab" aria-selected="false" className="h-[19px] w-[79px] rounded-t-[2px] border-t border-r border-l border-t-white border-l-white border-r-[#716f64] pt-px shadow-[inset_-1px_0_0_#aca899]">Miscellaneous</button>
          <button type="button" role="tab" aria-selected="false" className="h-[19px] w-[95px] rounded-t-[2px] border-t border-r border-l border-t-white border-l-white border-r-[#716f64] pt-px shadow-[inset_-1px_0_0_#aca899]">Feature Code List</button>
        </div>
        <div role="tabpanel" className="flex flex-1 flex-col gap-[13px] border border-t-white border-l-white border-r-[#716f64] border-b-[#716f64] pt-[27px] pl-[49px] shadow-[inset_-1px_-1px_0_#aca899]">
          <Group title="Spatial Reference System">
            <Combo
              label="Spatial Reference System"
              value="GREECE/HEPOS_GGRS87/TM87"
              className="h-[21px] w-[337px]"
              icon={
                <Icon w={18} h={16}>
                  <path d="M2.500 5v9h9M1 6.500h3M10 12.500v3" stroke="#000" />
                  <path d="M1 13h3v3H1z" fill="#000" />
                  <path d="M4.500 4V.5l3 3V.5M16 7.500h-3v5h3M13 10h2" stroke="#000080" />
                  <path d="M10 3.500l2-1h2l2 2" stroke="#404040" />
                </Icon>
              }
            />
            <button type="button" aria-label="Browse reference systems" className={clsx('ml-2 h-[21px] w-[17px] leading-none', RAISED)}>...</button>
          </Group>
          <Group title="Time zone">
            <Combo label="Time zone" value="(GMT+02:00) Athens, Istanbul, Minsk" className="h-[21px] w-[362px]" />
          </Group>
          <Group title="Linear unit">
            <span className="w-[93px]">All distances in</span>
            <Combo label="All distances in" value="Meters" className="h-[21px] w-[130px]" />
          </Group>
        </div>
        <div className="mt-[9px] flex">
          <PushButton className="w-[225px] border-r-black border-b-black border-l-black">Save As Defaults</PushButton>
          <span className="flex-1" />
          <PushButton className="mr-1.5 w-[75px] border-r-black border-b-black border-l-black">OK</PushButton>
          <PushButton className="mr-1.5 w-[75px]">Cancel</PushButton>
          <PushButton className="w-[75px]" disabled>Apply</PushButton>
        </div>
      </div>
      {/* Repaint band of the frame behind, which crosses the dialog while it is busy. */}
      <div className="absolute top-[347px] left-0 h-[33px] w-full border-b border-b-white bg-[#ece9d8] shadow-[inset_0_-1px_0_#aca899]" />
    </div>
  );
}

function ProgressDialog() {
  return (
    <div role="alertdialog" aria-label="Coordinate Transformation" className="absolute top-[471px] left-[818px] flex h-[108px] w-[285px] flex-col rounded-t-[6px] bg-[#0831d9]">
      <h2 className={clsx('h-[29px] rounded-t-[6px] pl-1.5 text-[12px]', CAPTION)}>Coordinate Transformation</h2>
      <p className="mx-[3px] mb-[3px] flex-1 bg-[#ece9d8] pt-[11px] pl-5 leading-[14px]">Updating Points...</p>
    </div>
  );
}

export default function App() {
  return (
    <div className="relative flex h-screen min-h-[900px] flex-col overflow-hidden bg-[#ece9d8] font-['Liberation_Sans',Arial,sans-serif] text-[11px] leading-[14px] text-black">
      <TitleBar />
      <MenuBar />
      <Toolbars />
      <div className="mt-px flex min-h-0 flex-1 border-b border-b-[#aca899] shadow-[0_1px_0_#fff]">
        <CommandPane />
        <div className="w-1.5 border-r border-l-2 border-l-white border-r-black shadow-[inset_-2px_0_0_#aca899]" />
        <MapWindow />
      </div>
      <div className="h-px" />
      <Workbook />
      <div className="h-1.5 border-t border-b border-t-white border-b-black shadow-[inset_0_-1px_0_#aca899]" />
      <MessageLog />
      <BottomBar />
      <ProjectSettings />
      <ProgressDialog />
    </div>
  );
}
